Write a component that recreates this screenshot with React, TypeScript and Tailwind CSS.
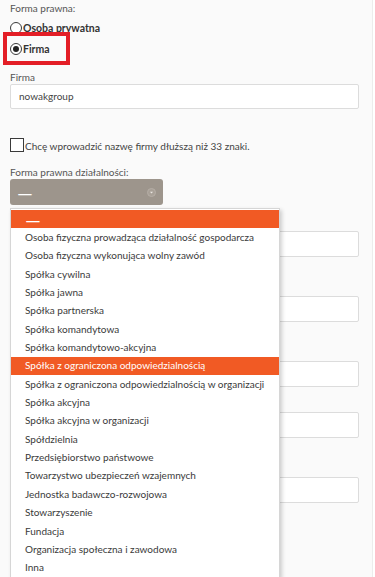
import React from "react";

const options = [
  "—",
  "Osoba fizyczna prowadząca działalność gospodarcza",
  "Osoba fizyczna wykonująca wolny zawód",
  "Spółka cywilna",
  "Spółka jawna",
  "Spółka partnerska",
  "Spółka komandytowa",
  "Spółka komandytowo-akcyjna",
  "Spółka z ograniczona odpowiedzialnością",
  "Spółka z ograniczona odpowiedzialnością w organizacji",
  "Spółka akcyjna",
  "Spółka akcyjna w organizacji",
  "Spółdzielnia",
  "Przedsiębiorstwo państwowe",
  "Towarzystwo ubezpieczeń wzajemnych",
  "Jednostka badawczo-rozwojowa",
  "Stowarzyszenie",
  "Fundacja",
  "Organizacja społeczna i zawodowa",
  "Inna",
];

function Radio({ checked }: { checked?: boolean }) {
  return (
    <span className="flex h-[12px] w-[12px] shrink-0 items-center justify-center rounded-full border border-[#3a3a3a] bg-white">
      {checked && <span className="h-[6px] w-[6px] rounded-full bg-[#222]" />}
    </span>
  );
}

function BgInput() {
  return <div className="h-[26px] w-[349px] rounded-[2px] border border-[#dcdcdc] bg-white" />;
}

export default function App() {
  return (
    <div
      className="relative h-[577px] w-[375px] overflow-hidden bg-white text-[#3a3a3a]"
      style={{ fontFamily: 'Lato, "Open Sans", sans-serif' }}
    >
      <div className="h-full w-[373px] border-r border-[#ececec] bg-[#fafafa] pl-[10px] pt-[2px] text-[10px]">
        <div className="h-[13px] leading-[13px] text-[#555]">Forma prawna:</div>
        <div className="mt-[5px] flex h-[14px] items-end">
          <Radio />
          <span className="ml-[1px] text-[10.5px] font-bold leading-[12px] text-[#333]">Osoba prywatna</span>
        </div>
        <div className="mt-[7px] flex h-[14px] items-end">
          <Radio checked />
          <span className="ml-[1px] text-[10.5px] font-bold leading-[12px] text-[#333]">Firma</span>
        </div>
        <div className="mt-[16px] h-[13px] leading-[13px] text-[#555]">Firma</div>
        <div className="flex h-[25px] w-[349px] items-center rounded-[2px] border border-[#dcdcdc] bg-white pl-[8px] text-[#444]">
          nowakgroup
        </div>
        <div className="mt-[29px] flex items-end">
          <span className="h-[14px] w-[14px] shrink-0 border border-[#3a3a3a] bg-white" />
          <span className="ml-[1px] leading-[12px] text-[#444]">Chcę wprowadzić nazwę firmy dłuższą niż 33 znaki.</span>
        </div>
        <div className="mt-[14px] h-[13px] leading-[13px] text-[#555]">Forma prawna działalności:</div>
        <div className="flex h-[26px] w-[153px] items-center justify-between rounded-[3px] bg-[#9d958c] pl-[7px] pr-[7px] text-white">
          <span className="text-[20px] leading-none">—</span>
          <svg width="9" height="9" viewBox="0 0 9 9">
            <circle cx="4.5" cy="4.5" r="4" fill="#a8a097" stroke="#b4ada5" strokeWidth="1" />
            <path d="M3 3.8 L6 3.8 L4.5 5.6 Z" fill="#ece8e4" />
          </svg>
        </div>
        <div className="mt-[26px]">
          <BgInput />
        </div>
        <div className="mt-[39px]">
          <BgInput />
        </div>
        <div className="mt-[39px]">
          <BgInput />
        </div>
        <div className="mt-[25px]">
          <BgInput />
        </div>
        <div className="mt-[39px]">
          <BgInput />
        </div>
      </div>

      {/* red highlight annotation */}
      <div className="absolute left-[3px] top-[32px] h-[33px] w-[67px] border-[4px] border-[#e31e26]" />

      {/* open select list */}
      <div className="absolute left-[10px] top-[208px] w-[270px] border border-[#d6d6d6] bg-white pt-[1px] shadow-[2px_2px_4px_rgba(0,0,0,0.18)]">
        {options.map((o, i) => {
          const active = i === 0 || i === 8;
          return (
            <div
              key={i}
              className={`flex h-[18.35px] items-center whitespace-nowrap pl-[14px] text-[10px] ${
                active ? "bg-[#f15a24] text-white" : "text-[#3a3a3a]"
              }`}
            >
              {i === 0 ? <span className="text-[20px] leading-none">{o}</span> : o}
            </div>
          );
        })}
      </div>
    </div>
  );
}
